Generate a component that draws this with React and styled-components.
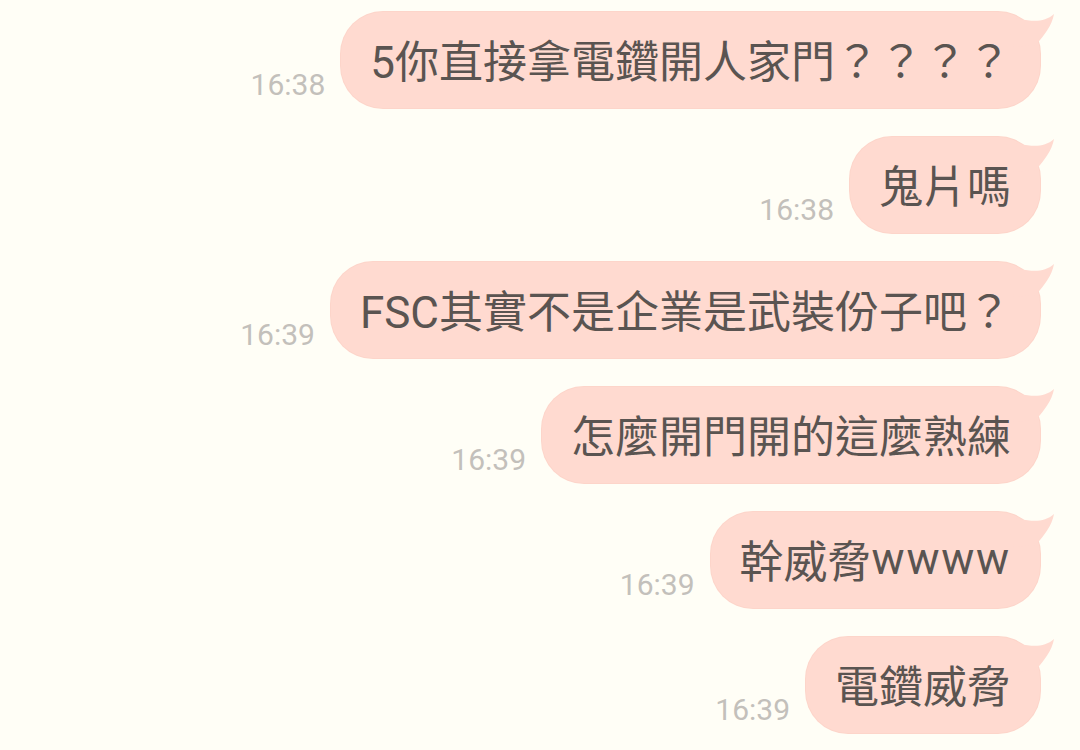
import React from "react";
import styled, { createGlobalStyle } from "styled-components";

const GlobalStyle = createGlobalStyle`
  html, body {
    margin: 0;
    padding: 0;
    background: #fffef6;
  }
  body {
    font-family: Roboto, "Noto Sans CJK TC", sans-serif;
  }
`;

const Chat = styled.div`
  width: 1080px;
  height: 750px;
  box-sizing: border-box;
  padding: 12px 40px 0 0;
  display: flex;
  flex-direction: column;
  align-items: flex-end;
  gap: 29px;
  background: #fffef6;
  overflow: hidden;
`;

const Row = styled.div`
  display: flex;
  justify-content: flex-end;
  align-items: flex-end;
  gap: 16px;
`;

const Time = styled.span`
  font-family: Roboto, sans-serif;
  font-size: 30px;
  line-height: 30px;
  color: #c3c0bb;
  margin-bottom: 8px;
  white-space: nowrap;
`;

const Bubble = styled.div`
  position: relative;
  height: 96px;
  box-sizing: border-box;
  padding: 0 29px 2px;
  display: flex;
  align-items: center;
  background: #ffdad0;
  border-radius: 42px;
  box-shadow: 0 0 0 1px #fdd5ca;
  font-family: Roboto, "Noto Sans CJK TC", sans-serif;
  font-size: 44px;
  color: #5a5451;
  white-space: nowrap;
`;

const Latin = styled.span`
  letter-spacing: 1.8px;
`;

const Tail = styled.svg`
  position: absolute;
  top: -1px;
  right: -16px;
  width: 56px;
  height: 40px;
  overflow: visible;
`;

const messages = [
  { time: "16:38", text: "5你直接拿電鑽開人家門？？？？" },
  { time: "16:38", text: "鬼片嗎" },
  { time: "16:39", text: "FSC其實不是企業是武裝份子吧？" },
  { time: "16:39", text: "怎麼開門開的這麼熟練" },
  { time: "16:39", text: "幹威脅", latin: "wwww" },
  { time: "16:39", text: "電鑽威脅" },
];

function TailShape() {
  return (
    <Tail viewBox="0 0 56 40">
      <path
        d="M6 6 L20 8 C34 11 45 11 54 3 C52 15 44 24 36 34 L14 36 Z"
        fill="#ffdad0"
      />
    </Tail>
  );
}

export default function App() {
  return (
    <>
      <GlobalStyle />
      <Chat>
        {messages.map((m, i) => (
          <Row key={i}>
            <Time>{m.time}</Time>
            <Bubble>
              {m.text}
              {m.latin && <Latin>{m.latin}</Latin>}
              <TailShape />
            </Bubble>
          </Row>
        ))}
      </Chat>
    </>
  );
}
